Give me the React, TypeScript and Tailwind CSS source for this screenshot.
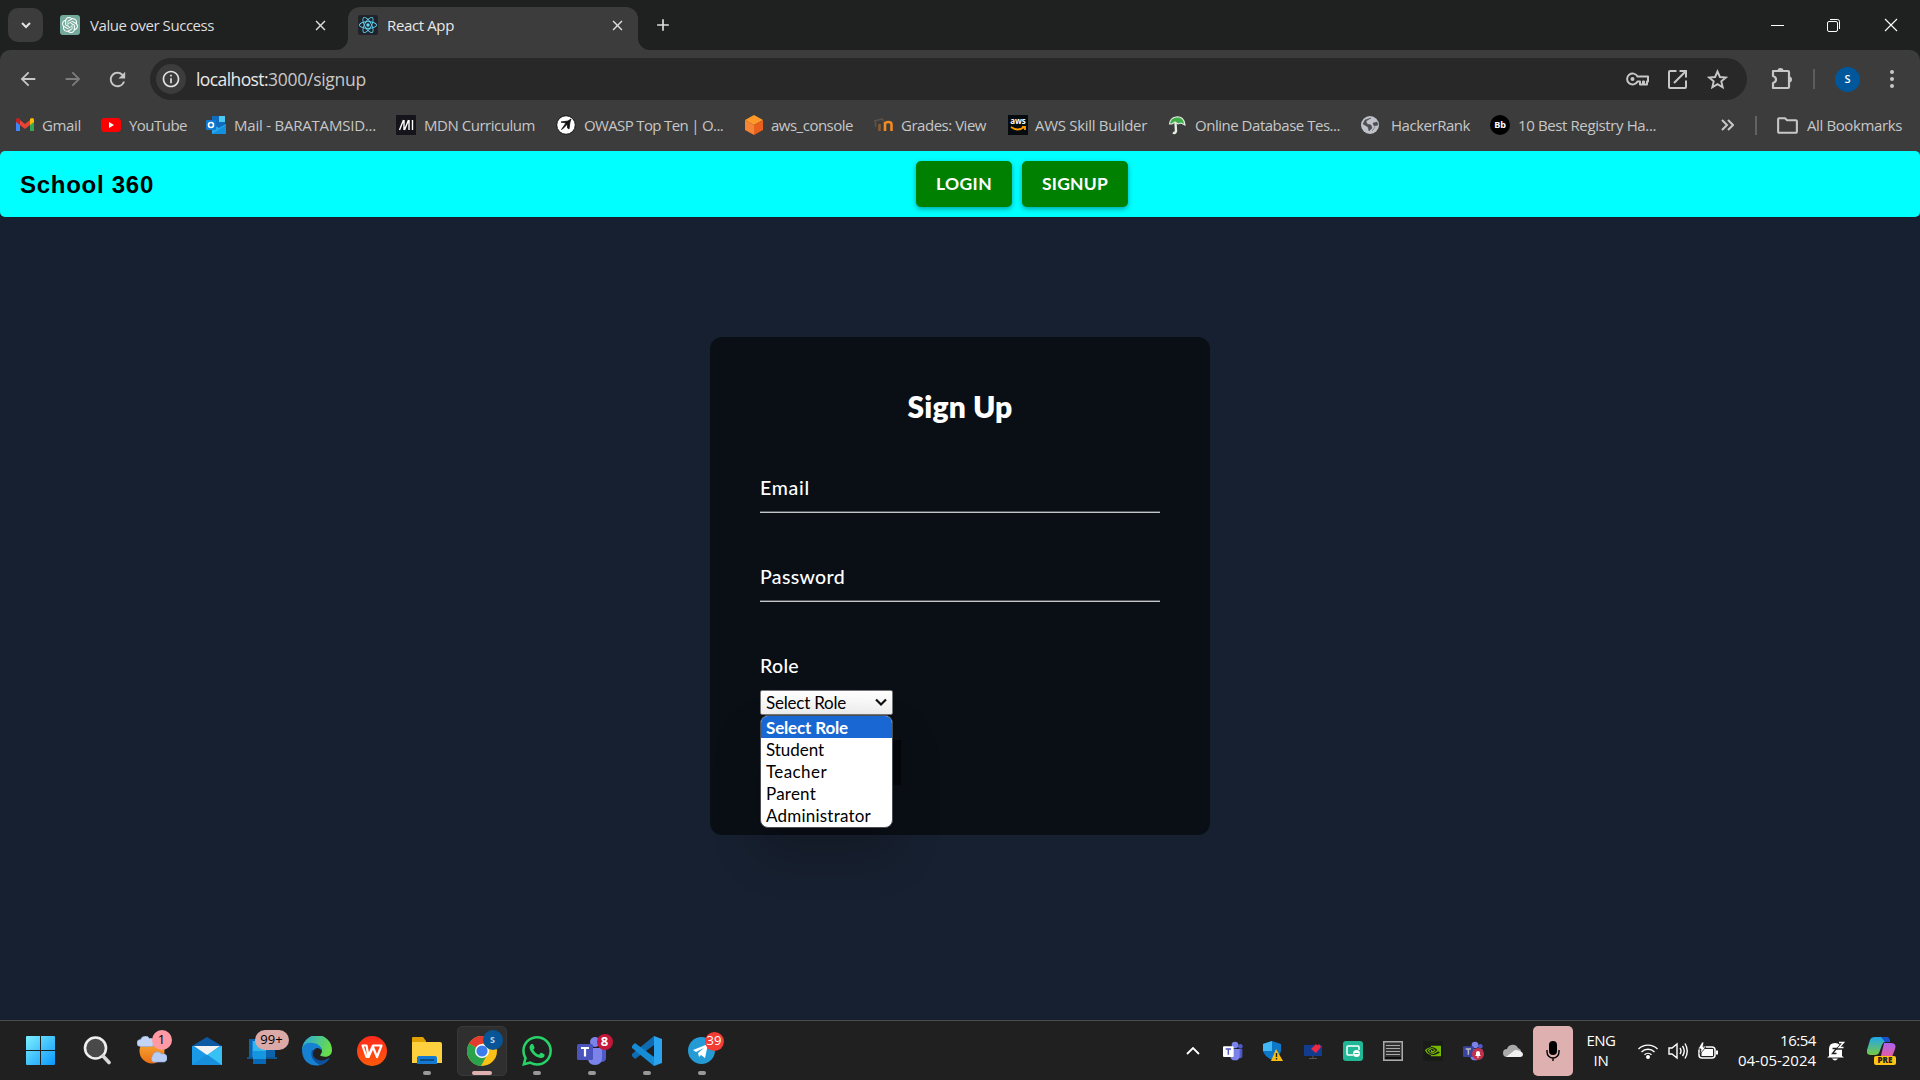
import React, { useLayoutEffect, useRef, useState } from "react";
import { MdInfoOutline, MdArrowBack, MdArrowForward, MdRefresh, MdAdd, MdClose, MdOutlineFolder } from "react-icons/md";
import { SiOpenai, SiReact, SiNvidia, SiWhatsapp } from "react-icons/si";

/* One line of text whose tracking is adjusted to fill the given width. */
function Fit({ w, className = "", children }: { w: number; className?: string; children: string }) {
  const ref = useRef<HTMLSpanElement>(null);
  const [ls, setLs] = useState(0);
  useLayoutEffect(() => {
    if (ref.current) setLs((w - ref.current.getBoundingClientRect().width) / children.length);
  }, [w, children]);
  return (
    <span className={"block shrink-0 whitespace-pre " + className} style={{ width: w }}>
      <span ref={ref} className="inline-block" style={{ letterSpacing: ls }}>{children}</span>
    </span>
  );
}

const ui = "font-['Open_Sans',sans-serif]";

function TabStrip() {
  return (
    <div className="flex h-[50px] bg-[#1f2120] text-[#dedede]">
      <div className="ml-2 mt-2 flex h-[34px] w-[35px] items-center justify-center rounded-[10px] bg-[#3c3c3c]">
        <svg width="12" height="12" viewBox="0 0 12 12" fill="none" stroke="#e3e3e3" strokeWidth="2"><path d="M2 4l4 4 4-4" /></svg>
      </div>
      <div className="flex h-[50px] w-[305px] items-center pl-[17px]">
        <div className="flex size-5 items-center justify-center rounded-[3px] bg-[#74aa9c] text-white"><SiOpenai size={16} /></div>
        <Fit w={124} className="ml-[10px] text-[15px]">Value over Success</Fit>
        <MdClose size={17} className="ml-[98px]" />
      </div>
      <div className="relative mt-[7px] flex h-[43px] w-[290px] items-center rounded-t-[12px] bg-[#3c3c3c] pb-[7px] pl-[10px]">
        <svg className="absolute -left-3 bottom-0" width="12" height="12"><path d="M12 0v12H0A12 12 0 0 0 12 0" fill="#3c3c3c" /></svg>
        <svg className="absolute -right-3 bottom-0" width="12" height="12"><path d="M0 0v12h12A12 12 0 0 1 0 0" fill="#3c3c3c" /></svg>
        <div className="flex size-5 items-center justify-center rounded-[2px] bg-[#20232a] text-[#61dafb]"><SiReact size={18} /></div>
        <Fit w={67} className="ml-[9px] pt-px text-[15px] text-[#e8e8e8]">React App</Fit>
        <MdClose size={17} className="ml-[155px]" />
      </div>
      <div className="ml-[15px] flex items-center"><MdAdd size={20} /></div>
      <div className="ml-auto flex items-center pr-[22px] text-white">
        <div className="h-px w-[13px] bg-white" />
        <svg className="ml-[42px]" width="15" height="15" viewBox="0 0 15 15" fill="none" stroke="white"><rect x="1.5" y="3.5" width="10" height="10" rx="1.5" /><path d="M4 1.5h7.5a2 2 0 0 1 2 2V11" /></svg>
        <svg className="ml-[43px]" width="14" height="14" viewBox="0 0 14 14" stroke="white" strokeWidth="1.1"><path d="M1 1l12 12M13 1L1 13" /></svg>
      </div>
    </div>
  );
}

function Toolbar() {
  return (
    <div className="flex h-[58px] items-center text-[#c7c7c7]">
      <MdArrowBack size={22} className="ml-[17px]" />
      <MdArrowForward size={22} className="ml-[23px] text-[#7d7d7d]" />
      <MdRefresh size={23} className="ml-[22px]" />
      <div className="ml-[21px] flex h-[42px] w-[1597px] items-center rounded-full bg-[#282828]">
        <div className="ml-[6px] flex size-[30px] items-center justify-center rounded-full bg-[#3c3c3c] text-[#e3e3e3]"><MdInfoOutline size={20} /></div>
        <div className="ml-[10px] flex text-[17.5px] leading-6">
          <Fit w={72} className="text-[#e8e8e8]">localhost:</Fit>
          <Fit w={98}>3000/signup</Fit>
        </div>
        <div className="ml-auto flex items-center pr-[19px]">
          <svg width="23" height="14" viewBox="0 0 23 14" fill="none" stroke="currentColor" strokeWidth="2"><path d="M11.500 4.500A5.500 5.500 0 1 0 11.500 9.500H14v3h3v-3h1v3h3v-3h1v-5z" strokeLinejoin="round" /><circle cx="6.500" cy="7" r="2" fill="currentColor" stroke="none" /></svg>
          <svg className="ml-[19px]" width="19" height="19" viewBox="0 0 19 19" fill="none" stroke="currentColor" strokeWidth="2"><path d="M8.500 1H2q-1 0-1 1v15q0 1 1 1h15q1 0 1-1v-6.500M11.500 1H18v6.500M18 1L6 13" /></svg>
          <svg className="ml-5" width="21" height="21" viewBox="0 0 21 21" fill="none" stroke="currentColor" strokeWidth="1.900"><path d="M10.500 2.500l2.400 5.500 6 .5-4.600 3.900 1.400 5.900-5.200-3.200-5.200 3.200 1.400-5.900-4.600-3.900 6-.5z" /></svg>
        </div>
      </div>
      <svg className="-mt-px ml-6" width="22" height="22" viewBox="0 0 22 22" fill="none" stroke="currentColor" strokeWidth="2.200"><path d="M2 3h15q1 0 1 1v15q0 1-1 1H2v-5q3-1 3-3.500T2 8z" strokeLinejoin="round" /><path d="M6.500 3a3 3 0 0 1 6 0zM18 8.500a3 3 0 0 1 0 6z" fill="currentColor" stroke="none" /></svg>
      <div className="ml-5 h-5 w-[2px] bg-[#5c5c5c]" />
      <div className={"ml-5 flex size-[25px] items-center justify-center rounded-full bg-[#01579b] text-[11px] font-semibold text-white " + ui}>S</div>
      <svg className="ml-[29px]" width="6" height="20" viewBox="0 0 6 20" fill="currentColor"><circle cx="3" cy="3" r="2" /><circle cx="3" cy="10" r="2" /><circle cx="3" cy="17" r="2" /></svg>
    </div>
  );
}

const marks: { x: number; w: number; tx: number; label: string; icon: React.ReactNode }[] = [
  { x: 15, tx: 42, w: 39, label: "Gmail", icon: <svg width="20" height="20" viewBox="0 0 20 20"><path d="M1 5v11h4V8z" fill="#4285f4" /><path d="M19 5v11h-4V8z" fill="#34a853" /><path d="M5 5l5 4 5-4v5l-5 4-5-4z" fill="#ea4335" /><path d="M1 5c0-2 2-3 4-1v6L1 7z" fill="#c5221f" /><path d="M19 5c0-2-2-3-4-1v6l4-3z" fill="#fbbc04" /></svg> },
  { x: 101, tx: 129, w: 58, label: "YouTube", icon: <svg width="20" height="20" viewBox="0 0 20 20"><rect y="3" width="20" height="14" rx="4" fill="#f00" /><path d="M8 7l5 3-5 3z" fill="#fff" /></svg> },
  { x: 206, tx: 234, w: 142, label: "Mail - BARATAMSID...", icon: <svg width="20" height="20" viewBox="0 0 20 20"><rect x="6" y="1" width="13" height="15" fill="#0f6cbd" /><path d="M13 1h6v6h-6z" fill="#50c8f5" /><path d="M6 9l7 4 7-4v10H6z" fill="#28a8ea" /><path d="M6 19l14-9v9z" fill="#1490df" /><rect y="5" width="10" height="10" rx="1" fill="#0f78d4" /><circle cx="5" cy="10" r="2.5" fill="none" stroke="#fff" strokeWidth="1.6" /></svg> },
  { x: 396, tx: 424, w: 111, label: "MDN Curriculum", icon: <svg width="20" height="20" viewBox="0 0 20 20"><rect width="20" height="20" fill="#15141a" /><path d="M3.500 15L7.500 5M8 15V5M8.500 15l4-10M13 15V5M16.500 5v10" fill="none" stroke="#fff" strokeWidth="1.400" /></svg> },
  { x: 556, tx: 584, w: 139, label: "OWASP Top Ten | O...", icon: <svg width="20" height="20" viewBox="0 0 20 20"><circle cx="10" cy="10" r="9.3" fill="#fff" stroke="#111" /><path d="M5 7l7-1 3-2-1 3-1 7-1.500-1V9l-5 5-1 .5L10 8z" fill="#111" stroke="#111" strokeWidth=".8" /></svg> },
  { x: 744, tx: 771, w: 82, label: "aws_console", icon: <svg width="20" height="20" viewBox="0 0 20 20"><path d="M10 0l9 5-9 5-9-5z" fill="#ff9a2a" /><path d="M1 5l9 5v10l-9-5z" fill="#f58534" /><path d="M19 5l-9 5v10l9-5z" fill="#e8601c" /></svg> },
  { x: 874, tx: 901, w: 85, label: "Grades: View", icon: <svg width="20" height="20" viewBox="0 0 20 20" fill="none" stroke="#f08a24" strokeWidth="2.600"><path d="M5.500 16V9" stroke="#8a5a30" /><path d="M11 16V7M11 9.500q0-2.500 3.300-2.500t3.200 2.500V16" /><path d="M0 6l8-2 2 2M1.500 6v6" stroke="#5d5148" strokeWidth="1.500" /></svg> },
  { x: 1008, tx: 1035, w: 112, label: "AWS Skill Builder", icon: <div className="flex h-5 w-5 flex-col items-center bg-[#060b10] pt-px text-[8px] font-bold leading-[10px] text-white"><span>aws</span><svg width="16" height="6" fill="none" stroke="#ff9900" strokeWidth="1.800"><path d="M1 1q7 5 13 0M12 1h3v3" /></svg></div> },
  { x: 1168, tx: 1195, w: 145, label: "Online Database Tes...", icon: <svg width="20" height="20" viewBox="0 0 20 20"><path d="M7.500 8l.5 8q-1 3-3 1.500" fill="none" stroke="#e4efe4" strokeWidth="2.400" /><path d="M1.500 9Q2 3 8 2q8-1 9 8l-4-2-3 1-3-2-3 2z" fill="#3fae49" stroke="#e6efe6" strokeWidth="1.100" /></svg> },
  { x: 1360, tx: 1391, w: 79, label: "HackerRank", icon: <svg width="20" height="20" viewBox="0 0 20 20"><circle cx="10" cy="10" r="9" fill="#bfc2c9" /><path d="M11 3l-5 3 1 3 4 1 1 3-3 3-1-4-5-3 2-4zM17 7l-4 1 1 3 4-1zM12 16l3-4" fill="#4b4d50" stroke="#4b4d50" strokeWidth=".5" /></svg> },
  { x: 1490, tx: 1518, w: 138, label: "10 Best Registry Ha...", icon: <div className="flex size-5 items-center justify-center rounded-full bg-black text-[9px] font-bold text-white">Bb</div> },
];

function Bookmarks() {
  return (
    <div className={"flex h-[34px] items-center pl-[15px] text-[15px] text-[#c7c7c7] " + ui}>
      {marks.map((m, i) => (
        <div key={m.label} className="flex shrink-0 items-center" style={{ width: (marks[i + 1]?.x ?? 1721) - m.x }}>
          <div className="shrink-0" style={{ width: m.tx - m.x }}>{m.icon}</div>
          <Fit w={m.w}>{m.label}</Fit>
        </div>
      ))}
      <svg width="13" height="12" viewBox="0 0 13 12" fill="none" stroke="#c7c7c7" strokeWidth="2"><path d="M1 1l5 5-5 5M7 1l5 5-5 5" /></svg>
      <div className="ml-[21px] h-[19px] w-[2px] bg-[#626262]" />
      <MdOutlineFolder size={25} className="ml-[18px]" />
      <Fit w={95} className="ml-[7px]">All Bookmarks</Fit>
    </div>
  );
}

function NavButton({ w, tw, children }: { w: number; tw: number; children: string }) {
  return (
    <div className="flex h-[46px] items-center justify-center rounded-[5px] bg-[#008000] font-['Lato',sans-serif] text-[17.500px] font-bold text-white shadow-[0_2px_5px_rgba(0,0,0,0.35)]" style={{ width: w }}>
      <Fit w={tw}>{children}</Fit>
    </div>
  );
}

function Field({ label, w }: { label: string; w: number }) {
  return (
    <div className="h-[89px]">
      <Fit w={w} className="h-[36px] text-[19.500px] font-medium leading-[26px]">{label}</Fit>
      <div className="h-[2px] border-b border-[#c6c7c8] bg-[#53575c]" />
    </div>
  );
}

const roles = [
  { label: "Select Role", w: 82 },
  { label: "Student", w: 58 },
  { label: "Teacher", w: 61 },
  { label: "Parent", w: 50 },
  { label: "Administrator", w: 105 },
];

function SignUp() {
  return (
    <div className="h-[498px] w-[500px] rounded-[12px] bg-[#0a0f16] px-[50px] font-['Lato',sans-serif] text-white">
      <div className="flex h-[133px] justify-center pt-[51px]">
        <Fit w={105} className="text-[30px] font-extrabold leading-[36px]">Sign Up</Fit>
      </div>
      <div className="pt-[5px]">
        <Field label="Email" w={50} />
        <Field label="Password" w={85} />
        <Fit w={39} className="h-[37px] text-[19.500px] font-medium leading-[26px]">Role</Fit>
      </div>
      <div className="relative h-[25px] w-[133px] text-[17px] text-black">
        <div className="flex h-[25px] items-center justify-between rounded-[2px] border border-[#777] bg-linear-to-b from-white to-[#f1f1f1] pl-[5px] pr-[5px]">
          <Fit w={80} className="pt-px leading-[22px]">Select Role</Fit>
          <svg width="12" height="9" viewBox="0 0 12 9" fill="none" stroke="#111" strokeWidth="2.200"><path d="M1 1.500l5 5 5-5" /></svg>
        </div>
        <div className="absolute left-0 top-[50px] h-[45px] w-[141px] bg-[#040609]"><div className="mt-8 h-[13px] w-px bg-[#23a0a0]" /></div>
        <div className="absolute left-0 top-[25px] w-[133px] overflow-hidden rounded-[8px] border border-[#4a4d52] bg-white pb-px shadow-[0_24px_48px_rgba(0,0,0,0.22)]">
          {roles.map((r, i) => (
            <div key={r.label} className={i === 0 ? "h-[22px] bg-[#1967d2] pl-[5px] font-bold text-white" : "h-[22px] pl-[5px]"}>
              <Fit w={r.w} className="pt-px leading-[22px]">{r.label}</Fit>
            </div>
          ))}
        </div>
      </div>
    </div>
  );
}

function Task({ children, dot, active }: { children: React.ReactNode; dot?: boolean; active?: boolean }) {
  return (
    <div className="flex h-full w-[55px] items-center justify-center">
      <div className={active ? "relative flex size-[50px] items-center justify-center rounded-[5px] border border-[#383838] bg-[#2f2f2f]" : "relative flex size-[50px] items-center justify-center"}>
        {children}
        {dot && <div className="absolute bottom-px left-[21px] h-1 w-2 rounded-full bg-[#999]" />}
        {active && <div className="absolute bottom-0 left-[14px] h-1 w-5 rounded-full bg-[#dfb0b0]" />}
      </div>
    </div>
  );
}

function TeamsIcon({ size, tile, letter }: { size: number; tile: string; letter: string }) {
  return (
    <svg width={size} height={size} viewBox="0 0 30 30">
      <circle cx="26" cy="8" r="3.500" fill="#5059c9" />
      <path d="M21 12h8v10q0 4-5 4z" fill="#5059c9" />
      <circle cx="18" cy="6" r="5" fill="#7b83eb" />
      <path d="M11 12h14v10q0 7-7 7t-7-7z" fill="#7b83eb" />
      <rect x="0" y="8" width="16" height="16" rx="1.500" fill={tile} />
      <path d="M4 12h8M8 12v8.500" stroke={letter} strokeWidth="2.200" />
    </svg>
  );
}

function Taskbar() {
  return (
    <div className={"flex h-[60px] items-stretch border-t border-[#4b4c4d] bg-[#202020] pl-[14px] text-white " + ui}>
      <Task>
        <svg width="29" height="29" viewBox="0 0 29 29" className="-ml-[2px]">
          <defs><linearGradient id="win" x1="0" y1="0" x2="1" y2="1"><stop offset="0" stopColor="#7df0ff" /><stop offset="1" stopColor="#0a97fb" /></linearGradient></defs>
          <path d="M1 0h13v14H0V1q0-1 1-1zM15 0h13q1 0 1 1v13H15zM0 15h14v14H1q-1 0-1-1zM15 15h14v13q0 1-1 1H15z" fill="url(#win)" />
        </svg>
      </Task>
      <Task>
        <svg width="28" height="29" viewBox="0 0 28 29"><circle cx="12.500" cy="12" r="10.500" fill="#494949" stroke="#efefef" strokeWidth="2.600" /><path d="M20 20l6 6.500" stroke="#d8d8d8" strokeWidth="3.600" strokeLinecap="round" /></svg>
      </Task>
      <Task>
        <svg width="30" height="30" viewBox="0 0 30 30">
          <defs><linearGradient id="sun" x1="0" y1="0" x2="0" y2="1"><stop offset="0" stopColor="#f8b23c" /><stop offset="1" stopColor="#ec6f12" /></linearGradient></defs>
          <circle cx="15" cy="15" r="12.500" fill="url(#sun)" />
          <path d="M3.500 10.500a3.500 3.500 0 0 1 0-7 5 5 0 0 1 9-1 4 4 0 0 1 2 8z" fill="#c3d4f5" stroke="#8fa9dc" strokeWidth=".6" />
          <path d="M16 26a4 4 0 0 1-.5-6 5 5 0 0 1 9-2 4 4 0 0 1 3 8z" fill="#b7cdf4" stroke="#86a3dc" strokeWidth=".6" />
        </svg>
        <div className="absolute left-[25px] top-[4px] flex size-5 items-center justify-center rounded-full bg-[#ff99a4] text-[13px] text-black">1</div>
      </Task>
      <Task>
        <svg width="30" height="28" viewBox="0 0 30 28"><path d="M0 9L15 0l15 9z" fill="#0c59a4" /><path d="M0 9h30v19H0z" fill="#1a9ae6" /><path d="M30 9v19L15 17.500z" fill="#35bdf3" /><path d="M0 28l15-10.500L30 28z" fill="#188fdd" /><path d="M30 9v19L16 18z" fill="#38c1f5" /><path d="M2 9h26l-13 9z" fill="#f2f2f2" /></svg>
      </Task>
      <Task>
        <svg width="30" height="28" viewBox="0 0 30 28"><path d="M2 2h26v20H2z" fill="#0a64ad" /><path d="M0 20h30v2H0z" fill="#0b5795" /><path d="M5 4h8v16H5z" fill="#1684d3" /><path d="M6 4h13v17H6z" fill="#32b4ee" /><path d="M6 14h13v12H6z" fill="#1596e1" /><path d="M6 22h13v5H6z" fill="#0768b5" /></svg>
        <div className="absolute left-[18px] top-[4px] flex h-5 w-[34px] items-center justify-center rounded-full bg-[#dca9a9] text-[13px] text-black">99+</div>
      </Task>
      <Task>
        <svg width="30" height="30" viewBox="0 0 30 30">
          <defs><linearGradient id="edge" x1="0" y1="0" x2="1" y2=".3"><stop offset="0" stopColor="#27a6e5" /><stop offset="1" stopColor="#68dd4c" /></linearGradient></defs>
          <path d="M0 14A15 15 0 0 1 30 14c0 6-5 8-11 6-2-1 1-2 1-5 0-4-5-7-10-6-6 0-10 5-10 5z" fill="url(#edge)" />
          <path d="M0 15c0-6 5-9 10-8 7 0 10 5 10 8-1-2-3-3-5-3-4 1-6 6-3 10 2 4 8 5 15 0C22 33 1 33 0 15z" fill="#1681d1" />
          <path d="M10 14c-2 5 0 11 8 15 5-1 8-4 10-7-7 4-13 3-16-1-2-3-1-5 0-7z" fill="#0c51a0" />
        </svg>
      </Task>
      <Task>
        <svg width="30" height="30" viewBox="0 0 30 30"><defs><linearGradient id="wps" x1="0" y1="0" x2="0" y2="1"><stop offset="0" stopColor="#ff2a1c" /><stop offset="1" stopColor="#ff5a0a" /></linearGradient></defs><circle cx="15" cy="15" r="15" fill="url(#wps)" /><path d="M5.500 9.500h4l2 11 4.500-11h8.500l-4.500 11.500-4-10-4.500 10h-2z" fill="none" stroke="#fff" strokeWidth="2.200" strokeLinejoin="round" /></svg>
      </Task>
      <Task dot>
        <svg width="30" height="27" viewBox="0 0 30 27"><path d="M0 1q0-1 1-1h10l3 4v4H0z" fill="#e1a100" /><path d="M0 5h28q2 0 2 2v19H0z" fill="#ffd03e" /><path d="M5 27v-6q0-2 2-2h16q2 0 2 2v6z" fill="#1479cf" /><path d="M8 23h14" stroke="#083e75" strokeWidth="1.500" /></svg>
      </Task>
      <Task active>
        <svg width="30" height="30" viewBox="0 0 30 30"><circle cx="15" cy="15" r="15" fill="#fbc116" /><path d="M15 15L2 7.500A15 15 0 0 1 28 7.500H15z" fill="#e33b2e" /><path d="M2 7.500A15 15 0 0 0 14 30l6-11-5-4z" fill="#2ba24c" /><circle cx="15" cy="15" r="7" fill="#fff" /><circle cx="15" cy="15" r="5.600" fill="#3b7ded" /></svg>
        <div className="absolute left-[25px] top-[3px] flex size-5 items-center justify-center rounded-full bg-[#075497] text-[9px] font-bold text-[#b9d2e8]">S</div>
      </Task>
      <Task dot><SiWhatsapp size={30} color="#25d366" /></Task>
      <Task dot>
        <TeamsIcon size={30} tile="#4b53bc" letter="#fff" />
        <div className="absolute left-[30px] top-[8px] flex size-4 items-center justify-center rounded-full bg-[#c4173a] text-[13px] font-bold">8</div>
      </Task>
      <Task dot>
        <svg width="30" height="30" viewBox="0 0 30 30"><path d="M22 0v9L3 23l-3-3v-2z" fill="#0f6cb3" /><path d="M22 30v-9L3 7l-3 3v2z" fill="#168bd6" /><path d="M22 0l8 3v24l-8 3z" fill="#2ba4ef" /></svg>
      </Task>
      <Task dot>
        <svg width="27" height="27" viewBox="0 0 27 27"><circle cx="13.500" cy="13.500" r="13.500" fill="#259bd6" /><path d="M5 13l15-6-3 14-4-3-2 2-1-4 6-5-8 4z" fill="#fff" /></svg>
        <div className="absolute left-[28px] top-[6px] flex size-[19px] items-center justify-center rounded-full bg-[#f23c34] text-[13px]">39</div>
      </Task>

      <div className="ml-auto flex items-center">
        {[
          <svg key="up" width="14" height="8" viewBox="0 0 14 8" fill="none" stroke="#fff" strokeWidth="1.800"><path d="M1 7l6-6 6 6" /></svg>,
          <TeamsIcon key="teams" size={20} tile="#fff" letter="#5059c9" />,
          <svg key="shield" width="20" height="20" viewBox="0 0 20 20"><path d="M9 0l9 3v7q-1 5-9 9-8-4-9-9V3z" fill="#0d77c9" /><path d="M9 0v10H0V3z" fill="#42b9f5" /><path d="M13 8l7 12H8z" fill="#fbbc12" /><path d="M13.500 12v4M13.500 17v1.500" stroke="#222" strokeWidth="1.400" /></svg>,
          <svg key="mon" width="20" height="18" viewBox="0 0 20 18"><rect x="1" y="3" width="18" height="11" fill="#123c8d" /><path d="M6 16.500h8M10 14v2" stroke="#555" /><path d="M8 7l5-5 1.500 1.500L16 2l2 3-5 6z" fill="#ef2843" /></svg>,
          <svg key="cast" width="20" height="20" viewBox="0 0 20 20"><rect width="20" height="20" rx="3" fill="#1fb795" /><path d="M10 14H5q-1 0-1-1V6q0-1 1-1h10q1 0 1 1v3" fill="none" stroke="#fff" strokeWidth="1.500" /><circle cx="13.500" cy="12.500" r="3.500" fill="#fff" /><path d="M11.500 12.500h4" stroke="#1fb795" /></svg>,
          <svg key="grid" width="20" height="20" viewBox="0 0 20 20"><rect x=".75" y=".75" width="18.500" height="18.500" fill="#303030" stroke="#aaa" strokeWidth="1.500" /><path d="M3 4.500h14M3 7.500h14M3 10.500h14M3 13.500h14" stroke="#aaa" /><path d="M2 17h16" stroke="#0d0d0d" strokeWidth="2" /></svg>,
          <div key="nv" className="flex size-5 items-center justify-center bg-[#191b18]"><SiNvidia size={16} color="#76b900" /></div>,
          <div key="t2" className="relative"><TeamsIcon size={20} tile="#3b43a0" letter="#bbb" /><div className="absolute -right-px top-[7px] flex size-3 items-center justify-center rounded-full bg-[#c4314b]"><svg width="6" height="8"><path d="M0 6l1-1V3a2 2 0 0 1 4 0v2l1 1zM2 6.500h2v1H2z" fill="#fff" /></svg></div></div>,
          <svg key="cloud" width="20" height="14" viewBox="0 0 20 14"><path d="M4 13a4 4 0 0 1 0-8 6 6 0 0 1 11-1 5 5 0 0 1 1 9z" fill="#a9a9a9" /><path d="M3 13l9-7q6 0 8 4 0 3-3 3z" fill="#f1f1f1" /></svg>,
        ].map((icon, i) => <div key={i} className="flex w-10 justify-center">{icon}</div>)}
        <div className="flex h-[50px] w-10 items-center justify-center rounded-[5px] bg-[#dfb0b0] text-black">
          <svg width="14" height="20" viewBox="0 0 14 20"><rect x="3" y="0" width="8" height="14" rx="4" /><path d="M1 9v2a6 6 0 0 0 12 0V9M7 17v3" fill="none" stroke="#000" strokeWidth="1.400" /></svg>
        </div>
        <div className="-mt-px flex w-[56px] flex-col items-center text-[15px] leading-5">
          <Fit w={29}>ENG</Fit><Fit w={15}>IN</Fit>
        </div>
        <div className="ml-[9px] flex items-center gap-[10px]">
          <svg width="20" height="16" viewBox="0 0 20 16" fill="none" stroke="#fff" strokeWidth="1.400"><path d="M.5 6a13.500 13.500 0 0 1 19 0M3.500 9a9.200 9.200 0 0 1 13 0M6.500 11.800a5 5 0 0 1 7 0" /><circle cx="10" cy="14" r="1.300" fill="#fff" /></svg>
          <svg width="20" height="18" viewBox="0 0 20 18" fill="none" stroke="#fff" strokeWidth="1.400"><path d="M1 6h3l5-4v14l-5-4H1zM12 6q2 3 0 6M14.500 4q3.500 5 0 10M17 1.500q4.500 7.500 0 15" /></svg>
          <svg width="21" height="18" viewBox="0 0 21 18"><rect x="1" y="5" width="16" height="11" rx="3" fill="none" stroke="#fff" strokeWidth="1.500" /><rect x="3.500" y="7" width="11.500" height="7" fill="#fff" /><path d="M18 8.500h2v4h-2z" fill="#fff" /><path d="M4 0L0 7h3l-1 5 6-7H5l1-5z" fill="#fff" stroke="#202020" strokeWidth=".8" /></svg>
        </div>
        <div className="-mt-[2px] ml-[19px] flex w-[78px] flex-col items-end text-[15px] leading-5">
          <Fit w={36}>16:54</Fit><Fit w={78}>04-05-2024</Fit>
        </div>
        <svg className="ml-[11px]" width="18" height="20" viewBox="0 0 18 20"><path d="M2 15V8q0-6 6-6 3 0 5 2l2 4v7l2 1.500H0z" fill="#fff" /><path d="M5 17.500h6q-3 4-6 0" fill="#fff" /><path d="M11 1h6l-5 6h5" fill="none" stroke="#202020" strokeWidth="3.500" /><path d="M5.500 7.500h4l-4 5h4" fill="none" stroke="#202020" strokeWidth="1.400" /><path d="M12 1.500h4.500l-4.500 5h4.500" fill="none" stroke="#fff" strokeWidth="1.400" /></svg>
        <div className="relative ml-[22px] mr-[23px] h-[30px] w-[30px]">
          <svg width="30" height="24" viewBox="0 0 30 24">
            <defs><linearGradient id="cpa" x1="0" y1="0" x2="0" y2="1"><stop offset="0" stopColor="#1ea7ee" /><stop offset="1" stopColor="#79c843" /></linearGradient><linearGradient id="cpb" x1="0" y1="0" x2="0" y2="1"><stop offset="0" stopColor="#ae63ee" /><stop offset="1" stopColor="#f35b8c" /></linearGradient></defs>
            <path d="M17 7h7q6 0 4 6l-3 8q-1 3-5 3h-7z" fill="url(#cpb)" /><path d="M8 1h12q2 0 3 5h-5q-2 0-3 3l-3 8q-1 2-4 2H4q-5 0-4-5L3 4q1-3 5-3z" fill="url(#cpa)" /><path d="M14 1h6q2 0 3 5h-5z" fill="#1752cf" />
          </svg>
          <div className="absolute left-[7px] top-[20px] flex h-[9px] w-[22px] items-center justify-center rounded-[2px] bg-[#ffc414] text-[8px] font-extrabold text-[#222]">PRE</div>
        </div>
      </div>
    </div>
  );
}

export default function App() {
  return (
    <div className={"flex h-[1080px] w-[1920px] flex-col overflow-hidden bg-[#172030] " + ui}>
      <TabStrip />
      <div className="bg-[#1f2120]">
        <div className="h-[101px] rounded-t-[10px] bg-[#3c3c3c]"><Toolbar /><Bookmarks /></div>
      </div>
      <div className="bg-[linear-gradient(#3c3c3c_50%,#172030_50%)]">
        <div className="flex h-[66px] items-center rounded-[5px] bg-[#00ffff] pl-5">
          <Fit w={134} className="pt-[2px] font-['Liberation_Sans',sans-serif] text-[24px] font-bold text-black">School 360</Fit>
          <div className="ml-[762px] flex gap-[10px]">
            <NavButton w={96} tw={56}>LOGIN</NavButton>
            <NavButton w={106} tw={66}>SIGNUP</NavButton>
          </div>
        </div>
      </div>
      <div className="flex flex-1 items-start justify-center pt-[120px]"><SignUp /></div>
      <Taskbar />
    </div>
  );
}
